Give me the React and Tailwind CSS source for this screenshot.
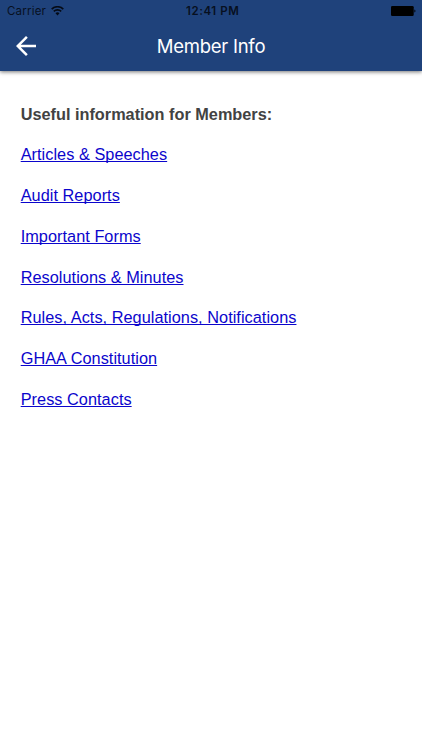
const links = [
    'Articles & Speeches',
    'Audit Reports',
    'Important Forms',
    'Resolutions & Minutes',
    'Rules, Acts, Regulations, Notifications',
    'GHAA Constitution',
    'Press Contacts',
]

function StatusBar() {
    return (
        <div className="grid grid-cols-3 items-center h-[22px] pl-[7px] pr-[6px] text-[11.5px] text-[#07101f] font-['Inter',sans-serif]">
            <div className="flex items-center gap-[5px]">
                <span className="pt-px tracking-[0.2px]">Carrier</span>
                <svg width="13" height="10" viewBox="0 0 13 10" fill="none" stroke="#050b16" strokeWidth="1.6">
                    <path d="M0.7 3.1a8.2 8.2 0 0 1 11.6 0" />
                    <path d="M2.8 5.4a5.2 5.2 0 0 1 7.4 0" />
                    <path d="M6.5 9.4L4.5 7.2a2.8 2.8 0 0 1 4 0z" fill="#050b16" stroke="none" />
                </svg>
            </div>
            <span className="pt-px pl-[2.5px] text-center font-semibold tracking-[0.6px]">12:41 PM</span>
            <svg className="justify-self-end" width="25" height="10" viewBox="0 0 25 10">
                <rect width="22.7" height="10" rx="1.3" fill="#000" />
                <path d="M23.4 3.5c1.4.3 1.4 2.7 0 3z" fill="#000" />
            </svg>
        </div>
    )
}

export default function App() {
    return (
        <div className="min-h-screen bg-white">
            <header className="h-[71px] bg-[#1f427b] shadow-[0_1px_4px_rgba(0,0,0,0.55)]">
                <StatusBar />
                <div className="grid grid-cols-[52px_1fr_52px] items-center h-[48px]">
                    <button className="pl-[16px]" aria-label="Back">
                        <svg width="20" height="20" viewBox="4 4 16 16" fill="#fff">
                            <path d="M20 11H7.83l5.59-5.59L12 4l-8 8 8 8 1.41-1.41L7.83 13H20v-2z" />
                        </svg>
                    </button>
                    <h1 className="pt-px text-center text-[18.5px] tracking-[-0.25px] text-white font-['Inter',sans-serif]">Member Info</h1>
                </div>
            </header>

            <main className="flex flex-col items-start gap-[20.75px] pt-[32.5px] pl-[20.7px] text-[16.3px] leading-[20px] font-['Liberation_Sans',Arial,sans-serif]">
                <h2 className="font-bold text-[#424242]">Useful information for Members:</h2>
                {links.map((label) => (
                    <a key={label} href="#" className="text-[#0b05cc] tracking-[0.04px] underline underline-offset-1 decoration-1 [text-decoration-skip-ink:none]">
                        {label}
                    </a>
                ))}
            </main>
        </div>
    )
}
